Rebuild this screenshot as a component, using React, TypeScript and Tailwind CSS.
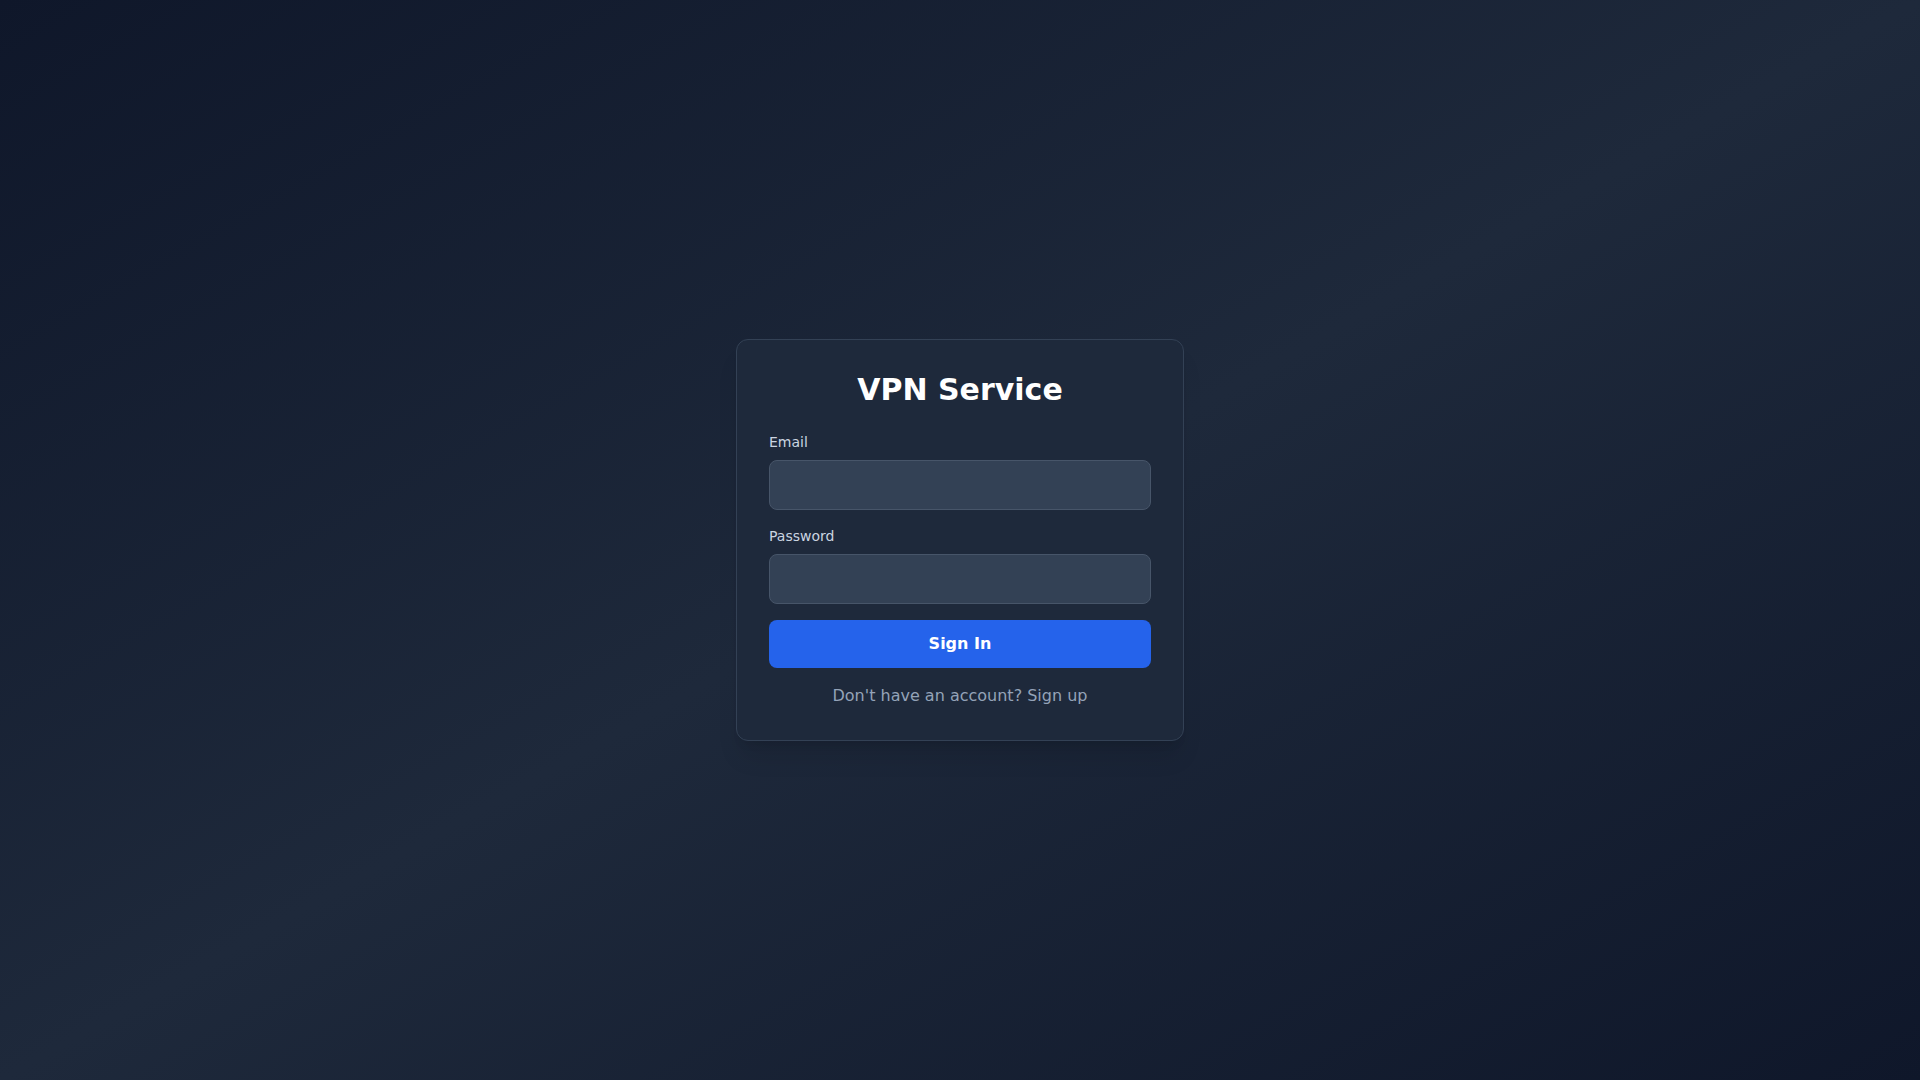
import React, { useState } from 'react';

export default function App() {
  const [email, setEmail] = useState('');
  const [password, setPassword] = useState('');

  const handleSubmit = (e: React.FormEvent) => {
    e.preventDefault();
  };

  return (
    <div className="min-h-screen flex items-center justify-center bg-gradient-to-br from-[#0f172a] via-[#1e293b] to-[#0f172a] font-['DejaVu_Sans',sans-serif]">
      <div className="w-full max-w-md bg-[#1e293b] border border-[#334155] rounded-xl shadow-xl p-8">
        <h1 className="text-3xl font-bold text-white text-center mb-6">VPN Service</h1>

        <form onSubmit={handleSubmit} className="space-y-4">
          <div>
            <label className="block text-sm text-[#cbd5e1] mb-2">Email</label>
            <input
              type="email"
              value={email}
              onChange={(e) => setEmail(e.target.value)}
              className="w-full px-4 py-3 bg-[#334155] border border-[#475569] rounded-lg text-white outline-none focus:border-[#3b82f6]"
            />
          </div>
          <div>
            <label className="block text-sm text-[#cbd5e1] mb-2">Password</label>
            <input
              type="password"
              value={password}
              onChange={(e) => setPassword(e.target.value)}
              className="w-full px-4 py-3 bg-[#334155] border border-[#475569] rounded-lg text-white outline-none focus:border-[#3b82f6]"
            />
          </div>
          <button
            type="submit"
            className="w-full py-3 bg-[#2563eb] hover:bg-[#1d4ed8] text-white font-semibold rounded-lg"
          >
            Sign In
          </button>
        </form>

        <p className="mt-4 text-center text-[#94a3b8]">Don't have an account? Sign up</p>
      </div>
    </div>
  );
}
